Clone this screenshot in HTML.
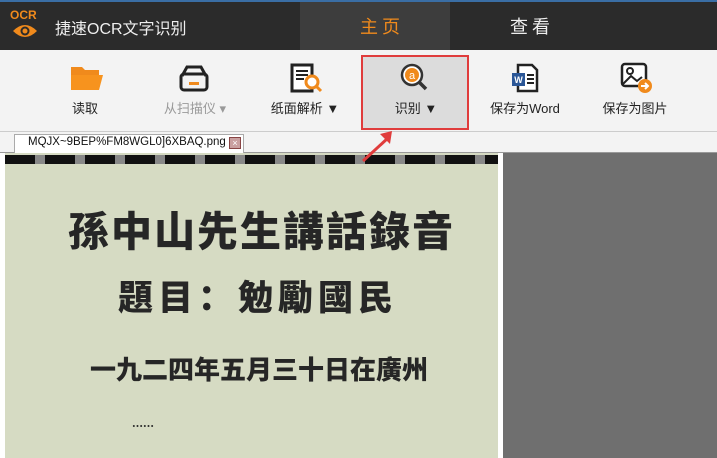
<!DOCTYPE html>
<html><head><meta charset="utf-8"><style>
*{margin:0;padding:0;box-sizing:border-box}
body{width:717px;height:458px;overflow:hidden;position:relative;background:#f3f3f3;font-family:"Liberation Sans","Noto Sans CJK SC",sans-serif}
.top{position:absolute;left:0;top:0;width:717px;height:50px;background:#2b2b2b;border-top:2px solid #3a6ea5}
.tabact{position:absolute;left:300px;top:2px;width:150px;height:48px;background:#3d3d3d}
.t{position:absolute;white-space:nowrap}
.btn{position:absolute;top:98px;font-size:13px;color:#222;text-align:center;width:110px}
.doc{position:absolute;left:5px;top:153px;width:493px;height:305px;background:#d6dbc3}
.cj{font-family:"Noto Sans CJK SC","WenQuanYi Zen Hei",sans-serif;font-weight:900;color:#262626;position:absolute;white-space:nowrap}
</style></head><body>
<div class="top"></div>
<div class="tabact"></div>
<div class="t" style="left:10px;top:8px;color:#f08a1c;font-size:12px;font-weight:bold">OCR</div>
<svg style="position:absolute;left:12px;top:23px" width="26" height="16" viewBox="0 0 26 16"><path d="M1 8 Q13 -4 25 8 Q13 20 1 8Z" fill="#f08a1c"/><circle cx="13" cy="8" r="4.5" fill="#2b2b2b"/><circle cx="13" cy="8" r="2.5" fill="#f08a1c"/></svg>
<div class="t" style="left:55px;top:15px;color:#eee;font-size:16px">捷速OCR文字识别</div>
<div class="t" style="left:360px;top:13px;color:#f08a1c;font-size:18px;letter-spacing:4px">主页</div>
<div class="t" style="left:510px;top:13px;color:#eee;font-size:18px;letter-spacing:4px">查看</div>

<div style="position:absolute;left:361px;top:55px;width:108px;height:75px;background:#dcdcdc;border:2px solid #e03c3c"></div>
<div style="position:absolute;left:0;top:131px;width:717px;height:1px;background:#ccc"></div>

<svg style="position:absolute;left:70px;top:65px" width="34" height="26"><path d="M1 2h11l3 3h14v5H1z" fill="#f08a1c"/><path d="M1 10h32l-4 15H1z" fill="#f7931e"/></svg>
<svg style="position:absolute;left:179px;top:64px" width="30" height="28"><rect x="2" y="10" width="26" height="16" rx="3" fill="none" stroke="#222" stroke-width="3"/><path d="M3 12 L8 3 h14 l5 9" fill="none" stroke="#222" stroke-width="3"/><rect x="10" y="18" width="10" height="3" fill="#f08a1c"/></svg>
<svg style="position:absolute;left:290px;top:63px" width="34" height="30"><rect x="2" y="2" width="20" height="26" fill="#fff" stroke="#222" stroke-width="3"/><path d="M6 8h12M6 12h12M6 16h8" stroke="#222" stroke-width="2"/><circle cx="22" cy="19" r="6" fill="#fff" stroke="#f08a1c" stroke-width="3"/><path d="M26 23l5 5" stroke="#f08a1c" stroke-width="3"/></svg>
<svg style="position:absolute;left:400px;top:63px" width="30" height="30"><circle cx="12" cy="12" r="10" fill="#fff" stroke="#333" stroke-width="2.5"/><circle cx="12" cy="12" r="7" fill="#f08a1c"/><text x="12" y="16" font-size="11" fill="#fff" text-anchor="middle" font-family="Liberation Sans">a</text><path d="M19 19l7 7" stroke="#333" stroke-width="3.5"/></svg>
<svg style="position:absolute;left:510px;top:63px" width="30" height="30"><path d="M8 2h14l5 5v21H8z" fill="#fff" stroke="#222" stroke-width="2.5"/><path d="M17 12h7M17 16h7M17 20h7" stroke="#222" stroke-width="2"/><rect x="2" y="10" width="13" height="13" fill="#2b5797"/><text x="8.5" y="20" font-size="9" fill="#fff" text-anchor="middle" font-weight="bold" font-family="Liberation Sans">W</text></svg>
<svg style="position:absolute;left:620px;top:62px" width="34" height="32"><rect x="2" y="2" width="24" height="22" rx="3" fill="#fff" stroke="#222" stroke-width="2.5"/><circle cx="10" cy="9" r="3" fill="none" stroke="#222" stroke-width="2"/><path d="M3 22l8-8 6 5 5-4" fill="none" stroke="#222" stroke-width="2"/><circle cx="25" cy="24" r="7" fill="#f08a1c"/><path d="M21 24h7M25 21l3 3-3 3" stroke="#fff" stroke-width="2" fill="none"/></svg>

<div class="btn" style="left:30px">读取</div>
<div class="btn" style="left:140px;color:#999">从扫描仪 ▾</div>
<div class="btn" style="left:250px">纸面解析 ▼</div>
<div class="btn" style="left:361px">识别 ▼</div>
<div class="btn" style="left:470px">保存为Word</div>
<div class="btn" style="left:580px">保存为图片</div>

<div style="position:absolute;left:0;top:152px;width:717px;height:1px;background:#999"></div>
<div style="position:absolute;left:14px;top:134px;width:230px;height:19px;background:#fff;border:1px solid #aaa;border-bottom:none"></div>
<div class="t" style="left:28px;top:136px;font-size:11.5px;color:#111">MQJX~9BEP%FM8WGL0]6XBAQ.png</div>
<div style="position:absolute;left:229px;top:137px;width:12px;height:12px;background:#c9a0a0;border:1px solid #844;color:#fff;font-size:9px;line-height:10px;text-align:center">×</div>

<div style="position:absolute;left:0;top:153px;width:503px;height:305px;background:#fff"></div>
<div style="position:absolute;left:503px;top:153px;width:214px;height:305px;background:#6f6f6f"></div>
<div class="doc"></div>
<div style="position:absolute;left:5px;top:155px;width:493px;height:9px;background:repeating-linear-gradient(90deg,#111 0 30px,#888 30px 40px)"></div>
<div class="cj" style="left:68px;top:198px;font-size:41px;letter-spacing:2px">孫中山先生講話錄音</div>
<div class="cj" style="left:118px;top:270px;font-size:35px;letter-spacing:5px">題目：勉勵國民</div>
<div class="cj" style="left:90px;top:350px;font-size:26px;letter-spacing:0px">一九二四年五月三十日在廣州</div>
<div class="cj" style="left:132px;top:418px;font-size:11px">……</div>

<svg style="position:absolute;left:360px;top:128px" width="40" height="36"><path d="M3 33 L28 10" stroke="#e03c3c" stroke-width="3"/><path d="M20 6 L32 3 L30 16Z" fill="#e03c3c"/></svg>
</body></html>
